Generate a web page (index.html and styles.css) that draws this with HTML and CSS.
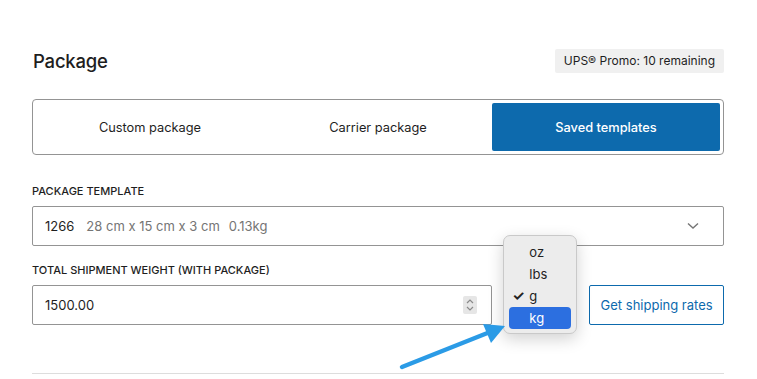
FILE: index.html
```html
<!DOCTYPE html>
<html lang="en">
<head>
  <meta charset="UTF-8">
  <meta name="viewport" content="width=device-width, initial-scale=1.0">
  <title>Package</title>
  <link rel="stylesheet" href="styles.css">
</head>
<body>
  <div class="panel">
    <div class="panel-header">
      <h2>Package</h2>
      <span class="promo">UPS® Promo: 10 remaining</span>
    </div>

    <div class="tabs">
      <button class="tab">Custom package</button>
      <button class="tab">Carrier package</button>
      <button class="tab active">Saved templates</button>
    </div>

    <label class="field-label">Package template</label>
    <div class="select">
      <span class="tpl-name">1266</span>
      <span class="tpl-meta">28 cm x 15 cm x 3 cm</span>
      <span class="tpl-meta">0.13kg</span>
      <svg class="chevron" width="12" height="8" viewBox="0 0 12 8">
        <path d="M1 1.5 L6 6 L11 1.5" fill="none" stroke="#757575" stroke-width="1.4"/>
      </svg>
    </div>

    <label class="field-label">Total shipment weight (with package)</label>
    <div class="weight-row">
      <div class="input">
        <span>1500.00</span>
        <span class="spinner">
          <svg width="8" height="14" viewBox="0 0 8 14">
            <path d="M1 5 L4 2 L7 5 M1 9 L4 12 L7 9" fill="none" stroke="#8a8a8a" stroke-width="1.2"/>
          </svg>
        </span>
      </div>
      <div class="unit">
        <!-- native popup menu, open -->
        <ul class="unit-menu">
          <li>oz</li>
          <li>lbs</li>
          <li class="checked"><span class="check">✓</span>g</li>
          <li class="hover">kg</li>
        </ul>
      </div>
      <button class="rates">Get shipping rates</button>
    </div>

    <hr class="divider">
  </div>

  <svg class="pointer" width="757" height="379" viewBox="0 0 757 379">
    <line x1="402" y1="367" x2="490" y2="332" stroke="#2b9be6" stroke-width="4.5" stroke-linecap="round"/>
    <polygon points="505,326 483,324 491,343" fill="#2b9be6"/>
  </svg>
</body>
</html>
```

FILE: styles.css
```css
body {
  margin: 0;
  font-family: Inter, "Noto Sans", sans-serif;
  color: #1e1e1e;
  background: #fff;
}
.panel {
  width: 692px;
  padding: 49px 0 0 32px;
}
.panel-header {
  display: flex;
  align-items: center;
  justify-content: space-between;
  height: 24px;
}
.panel-header h2 {
  margin: 0 0 0 1px;
  font-size: 18.5px;
  font-weight: 500;
  letter-spacing: -0.2px;
}
.promo {
  background: #f0f0f0;
  border-radius: 2px;
  padding: 0 9px;
  line-height: 24px;
  font-size: 12px;
  color: #1e1e1e;
}
.tabs {
  margin-top: 26px;
  border: 1px solid #949494;
  border-radius: 4px;
  padding: 3px;
  display: grid;
  grid-template-columns: 1fr 1fr 1fr;
}
.tab {
  height: 48px;
  border: none;
  border-radius: 2px;
  background: none;
  font-family: inherit;
  font-size: 12.8px;
  color: #1e1e1e;
}
.tab.active {
  background: #0d6aad;
  color: #fff;
  font-weight: 500;
}
.field-label {
  display: block;
  margin: 28px 0 7px;
  line-height: 16px;
  font-size: 11px;
  font-weight: 500;
  text-transform: uppercase;
  color: #1e1e1e;
}
.field-label + .select {
  margin-bottom: 16px;
}
.select + .field-label {
  margin-top: 0;
}
.select, .input {
  box-sizing: border-box;
  height: 40px;
  border: 1px solid #949494;
  border-radius: 2px;
  display: flex;
  align-items: center;
  padding: 0 12px;
  font-size: 13px;
}
.tpl-name {
  margin-right: 12px;
}
.tpl-meta {
  color: #757575;
  margin-right: 9px;
}
.chevron {
  margin-left: auto;
  margin-right: 12px;
}
.weight-row {
  display: flex;
  gap: 11px;
}
.input {
  width: 461px;
  justify-content: space-between;
  padding-right: 14px;
}
.spinner {
  width: 14px;
  height: 18px;
  background: #e6e6e6;
  border-radius: 2px;
  display: flex;
  align-items: center;
  justify-content: center;
}
.unit {
  width: 74px;
  position: relative;
}
.unit-menu {
  position: absolute;
  top: -50px;
  left: 0;
  width: 74px;
  box-sizing: border-box;
  margin: 0;
  padding: 5px 5px 4px;
  list-style: none;
  background: #ececec;
  border: 1px solid #c9c9c9;
  border-radius: 7px;
  box-shadow: 0 5px 16px rgba(0, 0, 0, 0.18);
  font-size: 13px;
  color: #222;
}
.unit-menu li {
  position: relative;
  height: 22px;
  line-height: 22px;
  padding-left: 20px;
  border-radius: 4px;
}
.unit-menu .check {
  position: absolute;
  left: 3px;
  font-size: 14px;
  font-weight: 700;
}
.unit-menu .hover {
  background: #2c6fe0;
  color: #fff;
}
.rates {
  margin-left: 1px;
  width: 135px;
  height: 40px;
  border: 1px solid #0d6aad;
  border-radius: 2px;
  background: #fff;
  color: #0d6aad;
  font-family: inherit;
  font-size: 13px;
}
.divider {
  margin: 48px 0 0;
  border: none;
  border-top: 1px solid #dddddd;
}
.pointer {
  position: absolute;
  top: 0;
  left: 0;
  pointer-events: none;
}
```
